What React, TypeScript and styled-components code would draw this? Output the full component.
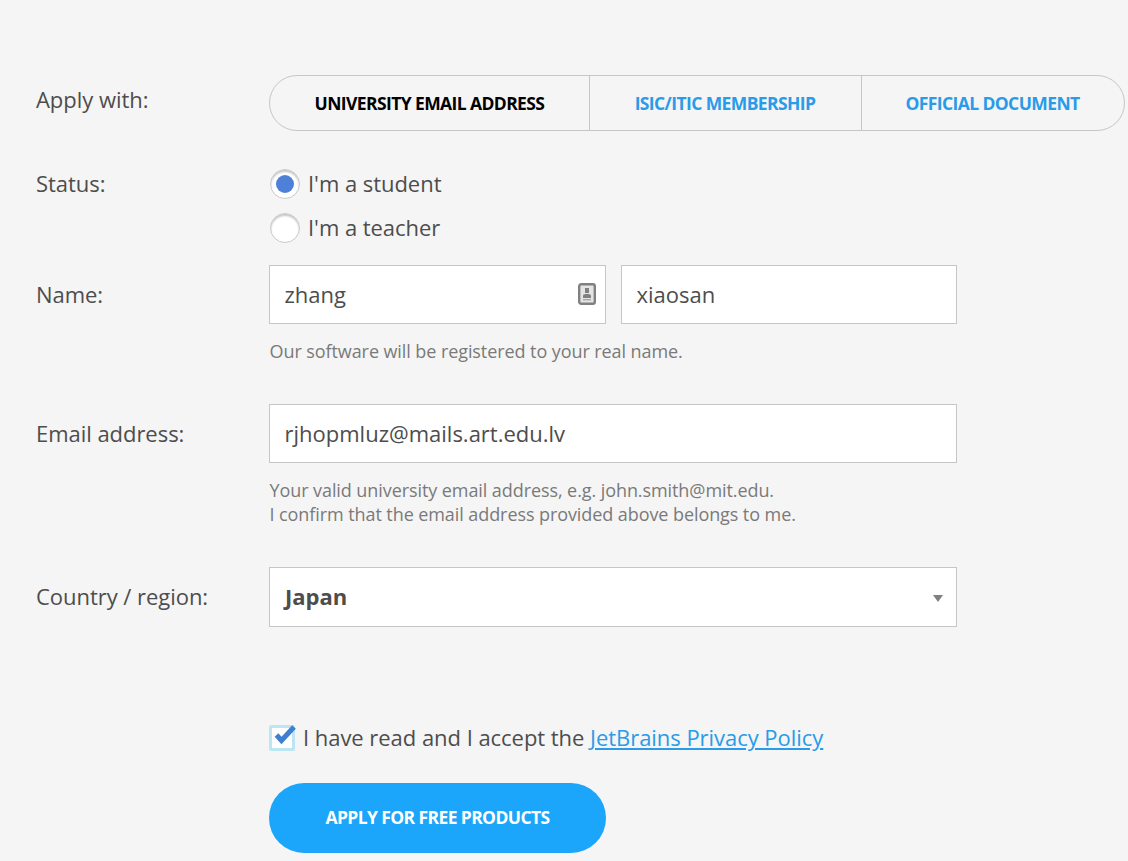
import React from "react";
import styled, { createGlobalStyle } from "styled-components";

const GlobalStyle = createGlobalStyle`
  html, body {
    margin: 0;
    padding: 0;
    background: #f5f5f5;
    overflow: hidden;
  }
  * {
    box-sizing: border-box;
  }
`;

const Page = styled.form`
  height: 861px;
  overflow: hidden;
  padding: 75px 3px 0 36px;
  font-family: "Open Sans", "Noto Sans", sans-serif;
  letter-spacing: -0.04px;
  color: #4d4d4d;
`;

const Row = styled.div<{ $gap?: number }>`
  display: grid;
  grid-template-columns: 233px 1fr;
  margin-bottom: ${(p) => p.$gap ?? 0}px;
`;

const Label = styled.div<{ $line: number }>`
  font-size: 22px;
  line-height: ${(p) => p.$line}px;
`;

const Tabs = styled.div`
  display: flex;
  height: 56px;
  border: 1px solid #c6c6c6;
  border-radius: 28px;
`;

const Tab = styled.div<{ $active?: boolean; $width: number }>`
  width: ${(p) => p.$width}px;
  display: flex;
  align-items: center;
  justify-content: center;
  font-size: 17.5px;
  font-weight: 700;
  letter-spacing: -0.6px;
  color: ${(p) => (p.$active ? "#000" : "#2a9be8")};
  & + & {
    border-left: 1px solid #c6c6c6;
    padding-right: 1px;
  }
`;

const RadioList = styled.div`
  display: flex;
  flex-direction: column;
`;

const RadioRow = styled.div`
  display: flex;
  align-items: center;
  gap: 8px;
  height: 44px;
  font-size: 22px;
  padding-left: 1px;
`;

const RadioText = styled.span`
  padding-bottom: 2px;
`;

const RadioCircle = styled.span<{ $checked?: boolean }>`
  width: 30px;
  height: 30px;
  border-radius: 50%;
  background: #fff;
  border: 1px solid #c9c9c9;
  box-shadow: inset 0 2px 2px rgba(0, 0, 0, 0.22);
  display: flex;
  align-items: center;
  justify-content: center;
  &::after {
    content: "";
    display: ${(p) => (p.$checked ? "block" : "none")};
    width: 18px;
    height: 18px;
    border-radius: 50%;
    background: #4f80d8;
  }
`;

const Fields = styled.div`
  display: flex;
  gap: 15px;
`;

const Field = styled.div<{ $width: number; $height?: number; $bold?: boolean }>`
  position: relative;
  width: ${(p) => p.$width}px;
  height: ${(p) => p.$height ?? 59}px;
  background: #fff;
  border: 1px solid #c6c6c6;
  display: flex;
  align-items: center;
  padding: 0 0 2px ${(p) => (p.$bold ? 15 : 14.5)}px;
  font-size: 22px;
  letter-spacing: 0;
  font-weight: ${(p) => (p.$bold ? 700 : 400)};
`;

const ContactIcon = styled.svg`
  position: absolute;
  right: 9px;
  top: 17px;
`;

const Caret = styled.span`
  position: absolute;
  right: 13px;
  top: 27px;
  width: 0;
  height: 0;
  border-left: 5px solid transparent;
  border-right: 5px solid transparent;
  border-top: 7px solid #808080;
`;

const Hint = styled.div`
  margin-top: 15px;
  padding-left: 0.5px;
  font-size: 18px;
  line-height: 24px;
  letter-spacing: -0.08px;
  color: #7a7a7a;
`;

const AcceptRow = styled.div`
  display: flex;
  align-items: center;
  gap: 8px;
  height: 40px;
  font-size: 22px;
`;

const AcceptText = styled.span`
  padding-bottom: 2px;
`;

const CheckBox = styled.span`
  position: relative;
  width: 26px;
  height: 26px;
  background: #fff;
  border: 3px solid #bde6f5;
  border-radius: 2px;
`;

const CheckMark = styled.svg`
  position: absolute;
  left: -1px;
  top: -8px;
`;

const Link = styled.a`
  color: #2a9be8;
  text-decoration: underline;
`;

const SubmitButton = styled.button`
  display: block;
  width: 337px;
  height: 70px;
  margin-top: 25px;
  padding: 0 0 2px;
  border: 0;
  border-radius: 35px;
  background: #1ba5fb;
  color: #fff;
  font-family: inherit;
  font-size: 17.5px;
  font-weight: 700;
  letter-spacing: -0.6px;
`;

export default function App() {
  return (
    <>
      <GlobalStyle />
      <Page>
        <Row $gap={31}>
          <Label $line={48}>Apply with:</Label>
          <Tabs>
            <Tab $active $width={319}>UNIVERSITY EMAIL ADDRESS</Tab>
            <Tab $width={272}>ISIC/ITIC MEMBERSHIP</Tab>
            <Tab $width={263}>OFFICIAL DOCUMENT</Tab>
          </Tabs>
        </Row>
        <Row $gap={15}>
          <Label $line={42}>Status:</Label>
          <RadioList>
            <RadioRow>
              <RadioCircle $checked />
              <RadioText>I'm a student</RadioText>
            </RadioRow>
            <RadioRow>
              <RadioCircle />
              <RadioText>I'm a teacher</RadioText>
            </RadioRow>
          </RadioList>
        </Row>
        <Row $gap={41}>
          <Label $line={59}>Name:</Label>
          <div>
            <Fields>
              <Field $width={337}>
                zhang
                <ContactIcon width="18" height="22" viewBox="0 0 18 22">
                  <rect x="1.2" y="1.2" width="15.6" height="19.6" rx="2" fill="#e4e4e4" stroke="#808080" strokeWidth="2.4" />
                  <rect x="7" y="5" width="4" height="5" fill="#808080" />
                  <path d="M5 15v-2.5c0-1 1.5-1.5 4-1.5s4 .5 4 1.5V15z" fill="#808080" />
                  <rect x="5" y="16" width="8" height="1.4" fill="#a8a8a8" />
                </ContactIcon>
              </Field>
              <Field $width={336}>xiaosan</Field>
            </Fields>
            <Hint>Our software will be registered to your real name.</Hint>
          </div>
        </Row>
        <Row $gap={41}>
          <Label $line={59}>Email address:</Label>
          <div>
            <Field $width={688}>rjhopmluz@mails.art.edu.lv</Field>
            <Hint>
              Your valid university email address, e.g. john.smith@mit.edu.
              <br />
              I confirm that the email address provided above belongs to me.
            </Hint>
          </div>
        </Row>
        <Row $gap={91}>
          <Label $line={58}>Country / region:</Label>
          <Field $width={688} $height={60} $bold>
            Japan
            <Caret />
          </Field>
        </Row>
        <Row>
          <div />
          <div>
            <AcceptRow>
              <CheckBox>
                <CheckMark width="30" height="30" viewBox="0 0 30 30">
                  <path d="M5.5 15l5 5.5L23 7" fill="none" stroke="#3f7fd0" strokeWidth="5" />
                </CheckMark>
              </CheckBox>
              <AcceptText>
                I have read and I accept the <Link>JetBrains Privacy Policy</Link>
              </AcceptText>
            </AcceptRow>
            <SubmitButton type="button">APPLY FOR FREE PRODUCTS</SubmitButton>
          </div>
        </Row>
      </Page>
    </>
  );
}
